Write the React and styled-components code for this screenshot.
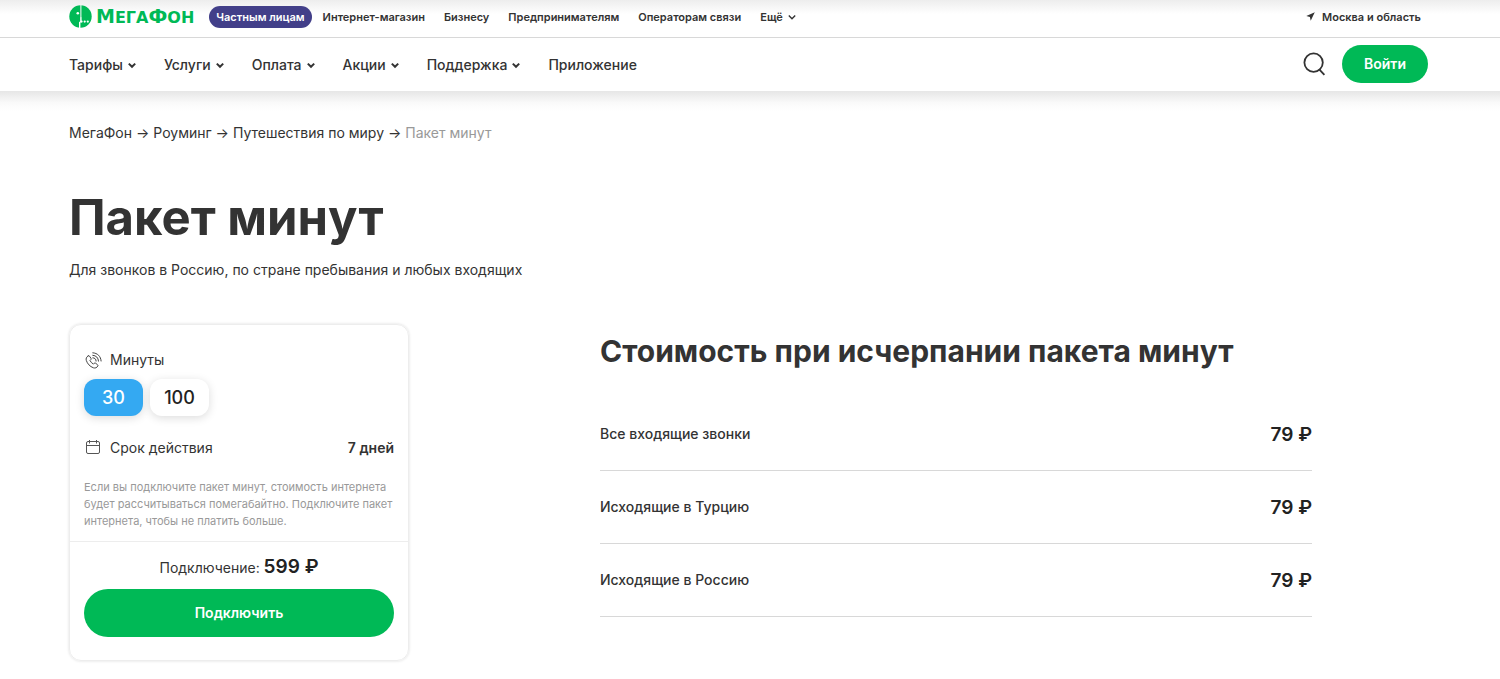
import { useState } from 'react'
import styled, { createGlobalStyle } from 'styled-components'

const GlobalStyle = createGlobalStyle`
    * {
        box-sizing: border-box;
    }

    body {
        margin: 0;
        background-color: #FFFFFF;
        color: #333333;
        font-family: Inter, "Liberation Sans", sans-serif;
        font-size: 14px;
    }

    a {
        color: inherit;
        text-decoration: none;
    }

    button {
        border: none;
        padding: 0;
        color: inherit;
        font-family: inherit;
        cursor: pointer;
    }
`;

const Header = styled.header`
    background-color: #FFFFFF;
`;

const TopBar = styled.div`
    display: flex;
    align-items: center;
    height: 38px;
    padding: 0 79px 4px 69px;
    border-bottom: 1px solid #D8D8D8;
    background: linear-gradient(#EDEDED, #FFFFFF 14px);
`;

const LogoLink = styled.a`
    display: flex;
    align-items: center;
    gap: 4px;
    margin-right: 15px;
    color: #00B956;
`;

const LogoText = styled.span`
    font-family: "DejaVu Sans", sans-serif;
    font-size: 19px;
    line-height: 22px;
    font-weight: bold;
`;

const LogoSmall = styled.span`
    font-size: 16px;
`;

const SegmentNav = styled.nav`
    display: flex;
    align-items: center;
    gap: 19px;
    font-size: 11px;
    font-weight: 600;
`;

const SegmentLink = styled.a`
    line-height: 22px;
    white-space: nowrap;
`;

const ActiveSegment = styled(SegmentLink)`
    margin-right: -8px;
    padding: 0 7px;
    border-radius: 11px;
    background-color: #423F89;
    color: #FFFFFF;
`;

const MoreButton = styled.button`
    display: flex;
    align-items: center;
    gap: 5px;
    background-color: transparent;
    font-size: 11px;
    font-weight: 600;
`;

const RegionButton = styled(MoreButton)`
    gap: 7px;
    margin-left: auto;
`;

const MainBar = styled.div`
    display: flex;
    align-items: center;
    height: 53px;
    padding: 0 72px 2px 69px;
`;

const MainNav = styled.nav`
    display: flex;
    gap: 28px;
    flex: 1;
    padding-top: 2px;
`;

const MainLink = styled.a`
    display: flex;
    align-items: center;
    gap: 5px;
    font-size: 14px;
    font-weight: 500;
`;

const SearchButton = styled.button`
    display: flex;
    margin-right: 16px;
    background-color: transparent;
`;

const GreenButton = styled.button`
    background-color: #00B956;
    color: #FFFFFF;
    font-size: 14px;
    font-weight: 600;
`;

const LoginButton = styled(GreenButton)`
    padding: 0 22px;
    border-radius: 19px;
    line-height: 38px;
`;

const ConnectButton = styled(GreenButton)`
    width: 100%;
    border-radius: 24px;
    line-height: 48px;
`;

const Content = styled.main`
    padding: 32px 69px 18px;
    background: linear-gradient(#E6E6E6, #FAFAFA 12px, #FFFFFF 20px);
`;

const Breadcrumbs = styled.nav`
    display: flex;
    gap: 4px;
    font-size: 14px;
    line-height: 20px;
`;

const CurrentPage = styled.span`
    color: #999999;
`;

const Title = styled.h1`
    margin: 45px 0 0;
    font-size: 49px;
    line-height: 60px;
    font-weight: 700;
`;

const Lead = styled.p`
    margin: 12px 0 0;
    font-size: 14px;
    line-height: 20px;
`;

const Columns = styled.div`
    display: grid;
    grid-template-columns: 340fr 712fr;
    column-gap: 191px;
    align-items: start;
    margin-top: 44px;
    padding-right: 119px;
`;

const Card = styled.section`
    border: 1px solid #EDEDED;
    border-radius: 12px;
    box-shadow: 0 0 3px rgba(0, 0, 0, 0.14);
`;

const CardOptions = styled.div`
    padding: 25px 14px 11px;
    border-bottom: 1px solid #EDEDED;
`;

const OptionRow = styled.div`
    display: flex;
    align-items: center;
    gap: 8px;
    padding-left: 1px;
    line-height: 20px;
`;

const OptionValue = styled.span`
    margin-left: auto;
    font-weight: 600;
`;

const ChipRow = styled.div`
    display: flex;
    gap: 7px;
    margin: 9px 0 22px;
`;

const Chip = styled.button`
    width: 59px;
    border-radius: 12px;
    background-color: ${props => props.$selected ? '#34A9F2' : '#FFFFFF'};
    color: ${props => props.$selected ? '#FFFFFF' : '#222222'};
    box-shadow: 0 2px 10px rgba(0, 0, 0, 0.14);
    font-size: 18px;
    line-height: 37px;
    font-weight: 500;
`;

const Note = styled.p`
    margin: 21px 0 0;
    color: #999999;
    font-size: 11px;
    line-height: 17px;
`;

const CardFooter = styled.div`
    padding: 12px 14px 23px;
    text-align: center;
`;

const ConnectPrice = styled.div`
    margin-bottom: 8px;
    line-height: 26px;
`;

const Price = styled.span`
    font-size: 19px;
    font-weight: 600;
    color: #222222;
`;

const PricesTitle = styled.h2`
    margin: 8px 0 27px;
    font-size: 30px;
    line-height: 38px;
    font-weight: 700;
`;

const PricesTable = styled.table`
    width: 100%;
    border-collapse: collapse;
`;

const PriceName = styled.th`
    height: 73px;
    padding: 0;
    border-bottom: 1px solid #D8D8D8;
    font-size: 14px;
    font-weight: 500;
    text-align: left;
`;

const PriceCell = styled.td`
    padding: 2px 0 0;
    border-bottom: 1px solid #D8D8D8;
    text-align: right;
`;

function LogoIcon() {
    return (
        <svg width="23" height="23" viewBox="0 0 23 23" aria-hidden="true">
            <circle cx="11.5" cy="11.5" r="11.2" fill="#00B956" />
            <path d="M11.9 0v13" fill="none" stroke="#FFFFFF" strokeWidth="1" />
            <path d="M11.9 12.5v4l-1.2 1V23" fill="none" stroke="#FFFFFF" strokeWidth="1.4" />
            <circle cx="8.8" cy="8.2" r="1.3" fill="#FFFFFF" />
            <circle cx="12.6" cy="16.6" r="1.1" fill="#FFFFFF" />
            <circle cx="15.7" cy="16.6" r="1.1" fill="#FFFFFF" />
            <circle cx="18.8" cy="16.6" r="1.1" fill="#FFFFFF" />
        </svg>
    );
}

function Chevron({width = 2}) {
    return (
        <svg width="8" height="8" viewBox="0 0 8 8" fill="none" stroke="currentColor" strokeWidth={width} aria-hidden="true">
            <path d="M.8 2.6 4 5.8l3.2-3.2" />
        </svg>
    );
}

function LocationIcon() {
    return (
        <svg width="9" height="9" viewBox="0 0 9 9" fill="#333333" aria-hidden="true">
            <path d="M8.8.3.3 4l3.6 1 .8 3.7z" />
        </svg>
    );
}

function SearchIcon() {
    return (
        <svg width="23" height="24" viewBox="0 0 23 24" fill="none" stroke="#333333" strokeWidth="1.8" aria-hidden="true">
            <circle cx="10.6" cy="10.6" r="9.2" />
            <path d="m16 17.2 5.4 5.6" />
        </svg>
    );
}

function PhoneIcon() {
    return (
        <svg width="17" height="17" viewBox="0 0 17 17" fill="none" stroke="#444444" strokeWidth="1" strokeLinecap="round" strokeLinejoin="round" aria-hidden="true">
            <path d="M3.1 3.9C1.4 5 .7 6.6 1.3 8.4c1 3.3 3.7 6.2 7.1 7.4 1.8.6 3.4-.1 4.4-1.7.3-.5.2-1-.2-1.3l-2-1.6c-.5-.4-1-.3-1.4.1l-.8.8C6.9 11.3 5.7 10 5 8.5l.8-.8c.4-.4.5-.9.2-1.4L4.5 4.2c-.4-.5-.9-.6-1.4-.3z" />
            <path d="M7.8 5.800c2 0 3.300 1.300 3.300 3.300M7.800 3.300c3.400.2 5.500 2.400 5.700 5.800M7.800.8c4.800.3 8 3.500 8.300 8.200" />
        </svg>
    );
}

function CalendarIcon() {
    return (
        <svg width="17" height="17" viewBox="0 0 17 17" fill="none" stroke="#555555" strokeWidth="1" aria-hidden="true">
            <rect x="1.5" y="1.5" width="13" height="12" rx="1.5" />
            <path d="M1.5 5.5h13M4.500 0v3.500M11.500 0v3.500" />
        </svg>
    );
}

const segments = ['Интернет-магазин', 'Бизнесу', 'Предпринимателям', 'Операторам связи'];

const menu = [
    {title: 'Тарифы', nested: true},
    {title: 'Услуги', nested: true},
    {title: 'Оплата', nested: true},
    {title: 'Акции', nested: true},
    {title: 'Поддержка', nested: true},
    {title: 'Приложение', nested: false},
];

const breadcrumbs = ['МегаФон', 'Роуминг', 'Путешествия по миру'];

const prices = [
    {name: 'Все входящие звонки', price: '79 ₽'},
    {name: 'Исходящие в Турцию', price: '79 ₽'},
    {name: 'Исходящие в Россию', price: '79 ₽'},
];

function PageHeader() {
    return (
        <Header>
            <TopBar>
                <LogoLink href="#">
                    <LogoIcon />
                    <LogoText>М<LogoSmall>ЕГА</LogoSmall>Ф<LogoSmall>ОН</LogoSmall></LogoText>
                </LogoLink>
                <SegmentNav>
                    <ActiveSegment href="#">Частным лицам</ActiveSegment>
                    {segments.map(title => <SegmentLink key={title} href="#">{title}</SegmentLink>)}
                    <MoreButton>Ещё <Chevron width={1.4} /></MoreButton>
                </SegmentNav>
                <RegionButton><LocationIcon /> Москва и область</RegionButton>
            </TopBar>
            <MainBar>
                <MainNav>
                    {menu.map(item => (
                        <MainLink key={item.title} href="#">
                            {item.title}
                            {item.nested && <Chevron />}
                        </MainLink>
                    ))}
                </MainNav>
                <SearchButton aria-label="Поиск"><SearchIcon /></SearchButton>
                <LoginButton>Войти</LoginButton>
            </MainBar>
        </Header>
    );
}

function PackageCard() {
    const [minutes, setMinutes] = useState(30);

    return (
        <Card>
            <CardOptions>
                <OptionRow><PhoneIcon /> Минуты</OptionRow>
                <ChipRow>
                    {[30, 100].map(value => (
                        <Chip
                            key={value}
                            $selected={minutes === value}
                            aria-pressed={minutes === value}
                            onClick={() => setMinutes(value)}
                        >
                            {value}
                        </Chip>
                    ))}
                </ChipRow>
                <OptionRow>
                    <CalendarIcon /> Срок действия
                    <OptionValue>7 дней</OptionValue>
                </OptionRow>
                <Note>
                    Если вы подключите пакет минут, стоимость интернета будет рассчитываться помегабайтно. Подключите пакет интернета, чтобы не платить больше.
                </Note>
            </CardOptions>
            <CardFooter>
                <ConnectPrice>Подключение: <Price>599 ₽</Price></ConnectPrice>
                <ConnectButton>Подключить</ConnectButton>
            </CardFooter>
        </Card>
    );
}

function App() {
    return (
        <>
            <GlobalStyle />
            <PageHeader />
            <Content>
                <Breadcrumbs>
                    {breadcrumbs.map(title => (
                        <span key={title}><a href="#">{title}</a> →</span>
                    ))}
                    <CurrentPage>Пакет минут</CurrentPage>
                </Breadcrumbs>
                <Title>Пакет минут</Title>
                <Lead>Для звонков в Россию, по стране пребывания и любых входящих</Lead>
                <Columns>
                    <PackageCard />
                    <section>
                        <PricesTitle>Стоимость при исчерпании пакета минут</PricesTitle>
                        <PricesTable>
                            <tbody>
                                {prices.map(item => (
                                    <tr key={item.name}>
                                        <PriceName scope="row">{item.name}</PriceName>
                                        <PriceCell><Price>{item.price}</Price></PriceCell>
                                    </tr>
                                ))}
                            </tbody>
                        </PricesTable>
                    </section>
                </Columns>
            </Content>
        </>
    );
}

export default App;
